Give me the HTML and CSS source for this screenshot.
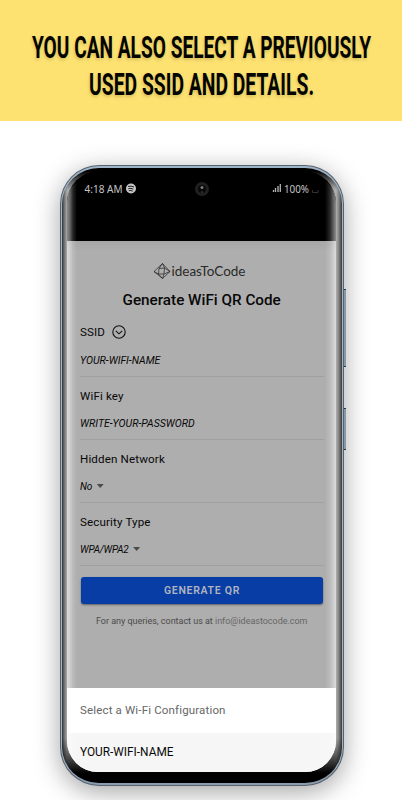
FILE: index.html
```html
<!DOCTYPE html>
<html lang="en">
<head>
<meta charset="utf-8">
<title>Generate WiFi QR Code</title>
<link rel="stylesheet" href="styles.css">
</head>
<body>
<header class="banner">
  <svg class="headline" width="402" height="120" viewBox="0 0 402 120">
    <text x="32" y="57.500" textLength="339" lengthAdjust="spacingAndGlyphs">YOU CAN ALSO SELECT A PREVIOUSLY</text>
    <text x="89" y="95" textLength="225" lengthAdjust="spacingAndGlyphs">USED SSID AND DETAILS.</text>
  </svg>
</header>
<main class="phone">
  <i class="side-button volume"></i>
  <i class="side-button power"></i>
  <div class="bezel">
    <div class="screen">
      <div class="status">
        <svg class="status-icons" width="269" height="70" viewBox="0 0 269 70">
          <text x="17.500" y="21.500" textLength="38" lengthAdjust="spacingAndGlyphs">4:18 AM</text>
          <circle cx="64" cy="17.500" r="5" fill="#c6c6c6"/>
          <path d="M61 15.500q3-1 6 .5M61.300 17.700q2.800-.8 5 .4M61.800 19.700q2.200-.6 4 .4" fill="none" stroke="#222" stroke-width="1"/>
          <circle cx="135" cy="18" r="7" fill="#202020"/>
          <circle cx="135" cy="18" r="4" fill="#080808"/>
          <circle cx="135" cy="16.500" r="1.500" fill="#777d86"/>
          <circle cx="135" cy="21" r=".8" fill="#555"/>
          <path d="M206.500 21v-2M208.500 21v-4M211 21v-6M213.300 21v-8" stroke="#b5b5b5" stroke-width="1.300"/>
          <text x="217" y="21.500" textLength="25" lengthAdjust="spacingAndGlyphs">100%</text>
          <path d="M245.500 19v2.500h5.500V19" fill="none" stroke="#333"/>
        </svg>
      </div>
      <section class="app">
        <svg class="logo" width="94" height="18" viewBox="0 0 94 18">
          <path d="M9.500 1.500 17 9.500 9.500 16.500 1 9.500ZM9.500 1.500 6 6.500 5.500 12 9.500 16.500M9.500 1.500 11.500 6 11 12 9.500 16.500M6 6.500 11.500 6 17 9.500 11 12 5.500 12 1 9.500" fill="none" stroke="#222" stroke-width=".7" stroke-linejoin="round"/>
          <text x="18.500" y="13.500" textLength="74" lengthAdjust="spacingAndGlyphs">ideasToCode</text>
        </svg>
        <h1>Generate WiFi QR Code</h1>
        <div class="field first">
          <div class="label">SSID
            <svg width="14" height="14" viewBox="0 0 14 14" fill="none" stroke="#111" stroke-width="1.100"><circle cx="7" cy="7" r="6.200"/><path d="m3.800 5.800 3.200 3 3.200-3"/></svg>
          </div>
          <div class="value">YOUR-WIFI-NAME</div>
        </div>
        <div class="field">
          <div class="label">WiFi key</div>
          <div class="value">WRITE-YOUR-PASSWORD</div>
        </div>
        <div class="field">
          <div class="label">Hidden Network</div>
          <div class="value choice"><span>No</span><i class="caret"></i></div>
        </div>
        <div class="field">
          <div class="label">Security Type</div>
          <div class="value choice wpa"><span>WPA/WPA2</span><i class="caret"></i></div>
        </div>
        <button class="generate">GENERATE QR</button>
        <p class="contact">For any queries, contact us at <span>info@ideastocode.com</span></p>
      </section>
      <section class="sheet">
        <h2>Select a Wi-Fi Configuration</h2>
        <div class="option">YOUR-WIFI-NAME</div>
      </section>
    </div>
  </div>
</main>
</body>
</html>
```
FILE: styles.css
```css
* { box-sizing: border-box; }
body {
  margin: 0;
  width: 402px;
  height: 800px;
  overflow: hidden;
  background: #fff;
  color: #080808;
  font-family: Roboto, sans-serif;
}
svg { display: block; flex: none; overflow: visible; }
.banner { height: 120.500px; background: #fde272; }
.headline text {
  font: 700 31.500px Roboto, sans-serif;
  fill: #050500;
  text-shadow: -1px 2px 4px rgba(80, 70, 0, .22);
}
.phone {
  position: relative;
  width: 284px;
  height: 621px;
  margin: 44.500px 0 0 60px;
  padding: 1px;
  border-radius: 39px;
  background: #57636e;
  box-shadow: 0 6px 26px rgba(0, 0, 0, .36);
}
.side-button {
  position: absolute;
  left: 284px;
  width: 2px;
  background: #8798a7;
  border-top: 1px solid #333;
  border-bottom: 1px solid #333;
}
.volume { top: 124px; height: 78px; }
.power { top: 243px; height: 42px; }
.bezel {
  height: 619px;
  padding: 3px 5px 12px 5px;
  border: 1px solid #9eb4c7;
  border-top-width: 2px;
  border-bottom: 2px solid #8c9caf;
  border-radius: 38px;
  background:
    linear-gradient(#000 3px, transparent 22px, transparent 570px, #000 605px),
    linear-gradient(90deg, #333 0, #6a6a6a 2px, #aaa 5px, #b0b0b0 274px, #808080 277px, #3a3a3a 280px);
}
.screen {
  position: relative;
  width: 269px;
  height: 601px;
  overflow: hidden;
  border-radius: 32px 32px 31px 31px;
  background: #000;
}
.screen::after {
  content: "";
  position: absolute;
  inset: 6px 0 0;
  border-radius: 24px 24px 0 0;
  background: linear-gradient(90deg, rgba(255,255,255,.56) 0, rgba(255,255,255,.4) 3px, rgba(255,255,255,.15) 6px, transparent 10px, transparent 258px, rgba(255,255,255,.16) 263px, rgba(255,255,255,.56) 269px);
  pointer-events: none;
}
.status { height: 70px; }
.status text { font: 11px "Noto Sans", sans-serif; fill: #c5c5c5; }
.app { height: 447px; padding: 21px 12px 0 13px; background: linear-gradient(#a6a6a6, #aeaeae 10px); }
.logo { margin-left: 72.500px; }
.logo text { font: 400 13.500px Lato, sans-serif; fill: #2a2a2a; }
h1 {
  margin: 10px 0 0 42.500px;
  font-size: 15.250px;
  line-height: 20px;
  font-weight: 500;
  white-space: nowrap;
}
.field { height: 63px; padding-top: 10px; border-bottom: 1px solid #a0a0a0; }
.field.first { height: 67px; padding-top: 13px; }
.label { display: flex; align-items: center; gap: 7px; height: 18px; font-size: 11.600px; letter-spacing: .14px; }
.value { display: flex; align-items: center; height: 18px; margin-top: 9px; font-size: 10.500px; font-style: italic; }
.choice { font-size: 10px; letter-spacing: -.1px; }
.wpa { letter-spacing: -.2px; }
.first .value { margin-top: 10px; }
.caret { width: 7px; height: 4px; margin-left: 4.500px; background: #4b4b4b; clip-path: polygon(0 0, 100% 0, 50% 100%); }
.generate {
  display: block;
  width: 242px;
  height: 27px;
  margin: 11px 0 0 1px;
  padding: 0;
  border: 0;
  border-radius: 3px;
  background: #073da5;
  color: #b0b4bf;
  font: 600 10.500px Roboto, sans-serif;
  letter-spacing: .7px;
  box-shadow: 0 1px 2px rgba(0, 0, 0, .45);
}
.contact { margin: 10px 0 0 16px; font-size: 9px; line-height: 15px; white-space: nowrap; color: #4b4b4b; letter-spacing: -.02px; }
.contact span { color: #666; }
.sheet { height: 84px; background: #fff; }
.sheet h2 { height: 45px; margin: 0; padding-left: 13px; font-size: 11.500px; line-height: 45px; font-weight: 400; letter-spacing: .16px; color: #666; }
.option { height: 39px; padding-left: 13px; background: #f6f6f6; font-size: 11.850px; line-height: 39px; }
```
